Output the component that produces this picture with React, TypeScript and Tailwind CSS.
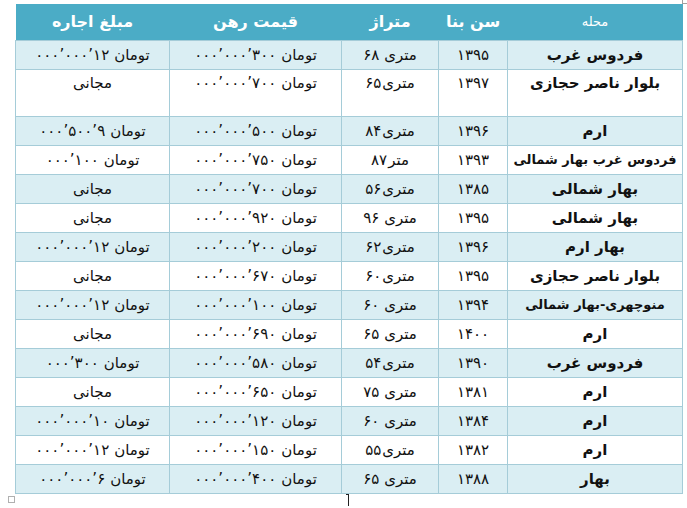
import React from "react";

type Row = {
  area: string;
  year: string;
  size: [string, string, boolean];
  deposit: string;
  rent: string | null;
  tall?: boolean;
};

// number groups are written in the order they show on screen, left to right
const rows: Row[] = [
  { area: "فردوس غرب", year: "۱۳۹۵", size: ["۶۸", "متری", true], deposit: "۰۰۰’۰۰۰’۳۰۰", rent: "۰۰۰’۰۰۰’۱۲" },
  { area: "بلوار ناصر حجازی", year: "۱۳۹۷", size: ["۶۵", "متری", false], deposit: "۰۰۰’۰۰۰’۷۰۰", rent: null, tall: true },
  { area: "ارم", year: "۱۳۹۶", size: ["۸۴", "متری", false], deposit: "۰۰۰’۰۰۰’۵۰۰", rent: "۰۰۰’۵۰۰’۹" },
  { area: "فردوس غرب بهار شمالی", year: "۱۳۹۳", size: ["۸۷", "متر", false], deposit: "۰۰۰’۰۰۰’۷۵۰", rent: "۰۰۰’۱۰۰" },
  { area: "بهار شمالی", year: "۱۳۸۵", size: ["۵۶", "متری", false], deposit: "۰۰۰’۰۰۰’۷۰۰", rent: null },
  { area: "بهار شمالی", year: "۱۳۹۵", size: ["۹۶", "متری", true], deposit: "۰۰۰’۰۰۰’۹۲۰", rent: null },
  { area: "بهار ارم", year: "۱۳۹۶", size: ["۶۲", "متری", false], deposit: "۰۰۰’۰۰۰’۲۰۰", rent: "۰۰۰’۰۰۰’۱۲" },
  { area: "بلوار ناصر حجازی", year: "۱۳۹۵", size: ["۶۰", "متری", false], deposit: "۰۰۰’۰۰۰’۶۷۰", rent: null },
  { area: "منوچهری-بهار شمالی", year: "۱۳۹۴", size: ["۶۰", "متری", true], deposit: "۰۰۰’۰۰۰’۱۰۰", rent: "۰۰۰’۰۰۰’۱۲" },
  { area: "ارم", year: "۱۴۰۰", size: ["۶۵", "متری", true], deposit: "۰۰۰’۰۰۰’۶۹۰", rent: null },
  { area: "فردوس غرب", year: "۱۳۹۰", size: ["۵۴", "متری", false], deposit: "۰۰۰’۰۰۰’۵۸۰", rent: "۰۰۰’۳۰۰" },
  { area: "ارم", year: "۱۳۸۱", size: ["۷۵", "متری", true], deposit: "۰۰۰’۰۰۰’۶۵۰", rent: null },
  { area: "ارم", year: "۱۳۸۴", size: ["۶۰", "متری", true], deposit: "۰۰۰’۰۰۰’۱۲۰", rent: "۰۰۰’۰۰۰’۱۰" },
  { area: "ارم", year: "۱۳۸۲", size: ["۵۵", "متری", false], deposit: "۰۰۰’۰۰۰’۱۵۰", rent: "۰۰۰’۰۰۰’۱۲" },
  { area: "بهار", year: "۱۳۸۸", size: ["۶۵", "متری", true], deposit: "۰۰۰’۰۰۰’۴۰۰", rent: "۰۰۰’۰۰۰’۶" },
];

const cell =
  "border border-[#a5ccd8] text-center text-[#111] px-0 whitespace-nowrap leading-[20px]";

// each run floats left, so the pieces sit left to right whatever the text direction
const Pair = ({ num, word, space }: { num: string; word: string; space: boolean }) => {
  const groups = num.split("’");
  return (
    <span className="inline-block align-middle">
      {groups.map((g, k) => (
        <React.Fragment key={k}>
          {k > 0 && <span className="float-left">’</span>}
          <span className="float-left">{g}</span>
        </React.Fragment>
      ))}
      <span className={`float-left ${space ? "ml-[5px]" : "ml-[1px]"}`}>{word}</span>
    </span>
  );
};

export default function App() {
  return (
    <div
      className="relative w-[687px] h-[508px] bg-white pl-[15px] pt-[4px] overflow-hidden"
      style={{ fontFamily: '"DejaVu Sans", "Noto Sans", sans-serif' }}
    >
      <table dir="rtl" className="w-[667px] border-collapse table-fixed">
        <colgroup>
          <col className="w-[175px]" />
          <col className="w-[69px]" />
          <col className="w-[97px]" />
          <col className="w-[172px]" />
          <col className="w-[154px]" />
        </colgroup>
        <thead>
          <tr className="h-[36px] bg-[#4bacc6] text-white">
            <th className="font-normal text-[13px]">محله</th>
            <th className="font-bold text-[16px]">سن بنا</th>
            <th className="font-bold text-[16px]">متراژ</th>
            <th className="font-bold text-[16px]">قیمت رهن</th>
            <th className="font-bold text-[16px]">مبلغ اجاره</th>
          </tr>
        </thead>
        <tbody>
          {rows.map((r, i) => {
            const pad = r.tall ? "pt-[3px]" : "";
            const areaSize = r.area.length > 16 ? "text-[13px]" : "text-[15px]";
            return (
              <tr
                key={i}
                className={`${r.tall ? "h-[47px] align-top" : "h-[29px] align-middle"} ${
                  i % 2 === 0 ? "bg-[#daeef3]" : "bg-white"
                }`}
              >
                <td className={`${cell} font-bold ${areaSize} ${pad}`}>{r.area}</td>
                <td className={`${cell} text-[15px] ${pad}`}>{r.year}</td>
                <td className={`${cell} text-[15px] ${pad}`}>
                  <Pair num={r.size[0]} word={r.size[1]} space={r.size[2]} />
                </td>
                <td className={`${cell} text-[15px] ${pad}`}>
                  <Pair num={r.deposit} word="تومان" space />
                </td>
                <td className={`${cell} text-[15px] ${pad}`}>
                  {r.rent === null ? "مجانی" : <Pair num={r.rent} word="تومان" space />}
                </td>
              </tr>
            );
          })}
        </tbody>
      </table>

      {/* editor marks */}
      <div className="absolute left-[8px] top-[496px] w-[7px] h-[7px] border border-[#b0b0b0]" />
      <div className="absolute left-[346px] top-[494px] w-[3px] h-[12px] border-t border-r border-[#222]" />
      <div className="absolute left-[682px] top-0 w-[5px] h-[4px] border-l border-b border-[#a0a0a0]" />
    </div>
  );
}
